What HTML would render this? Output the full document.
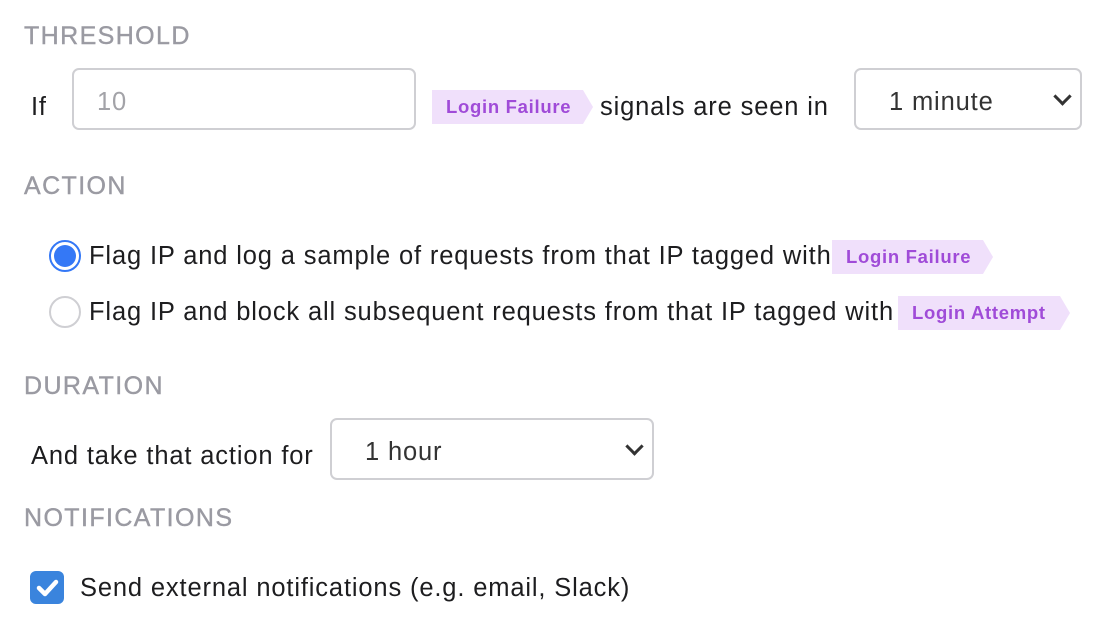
<!DOCTYPE html>
<html><head><style>
body{margin:0;width:1112px;height:626px;background:#fff;font-family:"Liberation Sans",Arial,sans-serif;position:relative;overflow:hidden;color:#1d1d1f}
.a{position:absolute;white-space:nowrap}
.h{font-size:25px;color:#9a9aa2;line-height:30px;letter-spacing:1.4px;-webkit-text-stroke:0.4px #9a9aa2}
.t{font-size:25.5px;line-height:30px;letter-spacing:0.85px}
.box{position:absolute;border:2px solid #cfcfd3;border-radius:7px;box-sizing:border-box;background:#fff}
.tag{position:absolute;background:#f0e0fb;color:#a04bd8;font-weight:bold;font-size:18.5px;letter-spacing:0.7px;line-height:34px;height:34px;padding-left:14px;box-sizing:border-box;clip-path:polygon(0 0,calc(100% - 10px) 0,100% 50%,calc(100% - 10px) 100%,0 100%)}
.chev{position:absolute;width:10px;height:10px;border-right:3.5px solid #333;border-bottom:3.5px solid #333;transform:rotate(45deg)}
</style></head><body>
<div class="a h" style="left:24px;top:21px">THRESHOLD</div>
<div class="a t" style="left:31px;top:92px">If</div>
<div class="box" style="left:72px;top:68px;width:344px;height:62px"></div>
<div class="a t" style="left:97px;top:87px;color:#a3a3a8">10</div>
<div class="tag" style="left:432px;top:90px;width:161px">Login Failure</div>
<div class="a t" style="left:600px;top:92px">signals are seen in</div>
<div class="box" style="left:854px;top:68px;width:228px;height:62px"></div>
<div class="a t" style="left:889px;top:87px;color:#333">1 minute</div>
<div class="chev" style="left:1056px;top:90px"></div>

<div class="a h" style="left:24px;top:171px">ACTION</div>
<div class="a" style="left:49px;top:240px;width:32px;height:32px;border-radius:50%;border:2.5px solid #3478f6;box-sizing:border-box"></div>
<div class="a" style="left:54px;top:245px;width:22px;height:22px;border-radius:50%;background:#3478f6"></div>
<div class="a t" style="left:89px;top:241px">Flag IP and log a sample of requests from that IP tagged with</div>
<div class="tag" style="left:832px;top:240px;width:161px">Login Failure</div>
<div class="a" style="left:49px;top:296px;width:32px;height:32px;border-radius:50%;border:2px solid #cfcfd3;box-sizing:border-box"></div>
<div class="a t" style="left:89px;top:297px">Flag IP and block all subsequent requests from that IP tagged with</div>
<div class="tag" style="left:898px;top:296px;width:172px">Login Attempt</div>

<div class="a h" style="left:24px;top:371px">DURATION</div>
<div class="a t" style="left:31px;top:441px">And take that action for</div>
<div class="box" style="left:330px;top:418px;width:324px;height:62px"></div>
<div class="a t" style="left:365px;top:437px;color:#333">1 hour</div>
<div class="chev" style="left:628px;top:440px"></div>

<div class="a h" style="left:24px;top:503px">NOTIFICATIONS</div>
<div class="a" style="left:30px;top:571px;width:34px;height:33px;border-radius:6px;background:#3a84dd"></div>
<svg class="a" style="left:30px;top:571px" width="34" height="33"><path d="M9 17 L15 23 L26 11" fill="none" stroke="#fff" stroke-width="4.5" stroke-linecap="round" stroke-linejoin="round"/></svg>
<div class="a t" style="left:80px;top:573px">Send external notifications (e.g. email, Slack)</div>
</body></html>
